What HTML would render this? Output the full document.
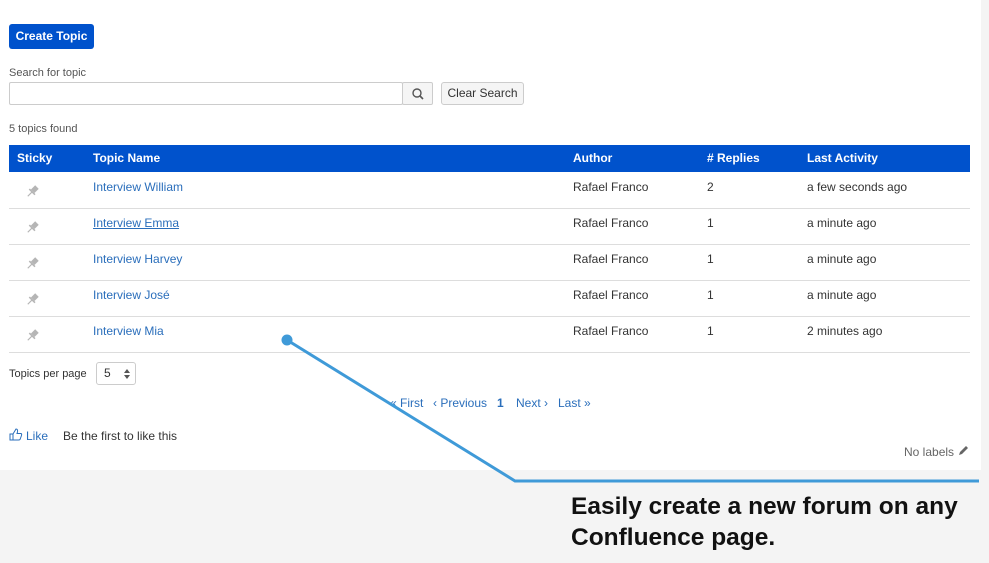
<!DOCTYPE html>
<html><head><meta charset="utf-8"><style>
*{box-sizing:border-box;margin:0;padding:0}
body{width:989px;height:563px;background:#f4f4f4;font-family:"Liberation Sans",Arial,sans-serif;position:relative;overflow:hidden;color:#333}
.panel{position:absolute;left:0;top:0;width:981px;height:470px;background:#fff}
.abs{position:absolute}
.btn{left:9px;top:24px;width:85px;height:25px;background:#0052cc;color:#fff;font-size:12px;font-weight:bold;border-radius:3px;text-align:center;line-height:25px}
.lbl{font-size:11px;color:#555}
.inp{left:9px;top:82px;width:394px;height:23px;border:1px solid #ccc;border-radius:2px}
.sbtn{left:402px;top:82px;width:31px;height:23px;border:1px solid #ccc;background:#f5f5f5;border-radius:2px}
.cbtn{left:441px;top:82px;width:83px;height:23px;border:1px solid #ccc;background:#f5f5f5;border-radius:3px;font-size:12px;color:#333;text-align:center;line-height:21px}
.hdr{left:9px;top:145px;width:961px;height:27px;background:#0052cc;color:#fff;font-size:12px;font-weight:bold}
.hdr span,.row span{position:absolute;top:0;line-height:27px}
.row{position:absolute;left:9px;width:961px;height:36px;border-bottom:1px solid #ddd;font-size:12px}
.row span{line-height:28px}
.row svg{position:absolute;left:16px;top:12px}
a{color:#2a6ebb;text-decoration:none}
.pg{top:396px;font-size:12px;color:#2a6ebb}
</style></head><body>
<div class="panel"></div>
<div class="abs btn">Create Topic</div>
<div class="abs lbl" style="left:9px;top:67px">Search for topic</div>
<div class="abs inp"></div>
<div class="abs sbtn"><svg width="31" height="23"><circle cx="14" cy="10" r="4" fill="none" stroke="#555" stroke-width="1.4"/><line x1="17" y1="13" x2="20" y2="16" stroke="#555" stroke-width="1.6"/></svg></div>
<div class="abs cbtn">Clear Search</div>
<div class="abs lbl" style="left:9px;top:123px">5 topics found</div>
<div class="abs hdr"><span style="left:8px">Sticky</span><span style="left:84px">Topic Name</span><span style="left:564px">Author</span><span style="left:698px"># Replies</span><span style="left:798px">Last Activity</span></div>
<div class="row" style="top:173px"><svg width="14" height="14"><g fill="#b5b5b5" transform="rotate(45 7 7)"><rect x="4.5" y="0" width="5" height="6"/><rect x="3" y="6" width="8" height="1.6"/><rect x="6.4" y="7" width="1.2" height="6"/></g></svg><span style="left:84px"><a>Interview William</a></span><span style="left:564px">Rafael Franco</span><span style="left:698px">2</span><span style="left:798px">a few seconds ago</span></div>
<div class="row" style="top:209px"><svg width="14" height="14"><g fill="#b5b5b5" transform="rotate(45 7 7)"><rect x="4.5" y="0" width="5" height="6"/><rect x="3" y="6" width="8" height="1.6"/><rect x="6.4" y="7" width="1.2" height="6"/></g></svg><span style="left:84px"><a style="text-decoration:underline">Interview Emma</a></span><span style="left:564px">Rafael Franco</span><span style="left:698px">1</span><span style="left:798px">a minute ago</span></div>
<div class="row" style="top:245px"><svg width="14" height="14"><g fill="#b5b5b5" transform="rotate(45 7 7)"><rect x="4.5" y="0" width="5" height="6"/><rect x="3" y="6" width="8" height="1.6"/><rect x="6.4" y="7" width="1.2" height="6"/></g></svg><span style="left:84px"><a>Interview Harvey</a></span><span style="left:564px">Rafael Franco</span><span style="left:698px">1</span><span style="left:798px">a minute ago</span></div>
<div class="row" style="top:281px"><svg width="14" height="14"><g fill="#b5b5b5" transform="rotate(45 7 7)"><rect x="4.5" y="0" width="5" height="6"/><rect x="3" y="6" width="8" height="1.6"/><rect x="6.4" y="7" width="1.2" height="6"/></g></svg><span style="left:84px"><a>Interview José</a></span><span style="left:564px">Rafael Franco</span><span style="left:698px">1</span><span style="left:798px">a minute ago</span></div>
<div class="row" style="top:317px"><svg width="14" height="14"><g fill="#b5b5b5" transform="rotate(45 7 7)"><rect x="4.5" y="0" width="5" height="6"/><rect x="3" y="6" width="8" height="1.6"/><rect x="6.4" y="7" width="1.2" height="6"/></g></svg><span style="left:84px"><a>Interview Mia</a></span><span style="left:564px">Rafael Franco</span><span style="left:698px">1</span><span style="left:798px">2 minutes ago</span></div>
<div class="abs lbl" style="left:9px;top:368px;color:#333">Topics per page</div>
<div class="abs" style="left:96px;top:362px;width:40px;height:23px;border:1px solid #ccc;border-radius:3px;font-size:12px;line-height:21px;padding-left:7px">5<svg style="position:absolute;right:5px;top:6px" width="6" height="10"><path d="M0 4 L3 0 L6 4Z M0 6 L3 10 L6 6Z" fill="#555"/></svg></div>
<div class="abs pg" style="left:390px">« First</div>
<div class="abs pg" style="left:433px">‹ Previous</div>
<div class="abs pg" style="left:497px;font-weight:bold">1</div>
<div class="abs pg" style="left:516px">Next ›</div>
<div class="abs pg" style="left:558px">Last »</div>
<svg class="abs" style="left:9px;top:428px" width="14" height="13"><path d="M1 6 H4 V12 H1Z M4 6 L7 1 Q9 1 8.5 4 L8 5.5 H12 Q13 6 12.5 7.5 L11 11.5 Q10.5 12 9.5 12 H4" fill="none" stroke="#2a6ebb" stroke-width="1"/></svg>
<div class="abs" style="left:26px;top:429px;font-size:12px;color:#2a6ebb">Like</div>
<div class="abs" style="left:63px;top:429px;font-size:12px">Be the first to like this</div>
<div class="abs" style="left:904px;top:445px;font-size:12px;color:#666">No labels</div>
<svg class="abs" style="left:958px;top:445px" width="11" height="11"><path d="M1 10 L2 7 L8 1 L10 3 L4 9Z" fill="#666"/></svg>
<svg class="abs" style="left:0;top:0" width="989" height="563"><circle cx="287" cy="340" r="5.5" fill="#3f9ad8"/><polyline points="287,340 515,481 979,481" fill="none" stroke="#3f9ad8" stroke-width="3"/></svg>
<div class="abs" style="left:571px;top:491px;font-size:24.5px;font-weight:bold;color:#111;line-height:31px">Easily create a new forum on any<br>Confluence page.</div>
</body></html>
